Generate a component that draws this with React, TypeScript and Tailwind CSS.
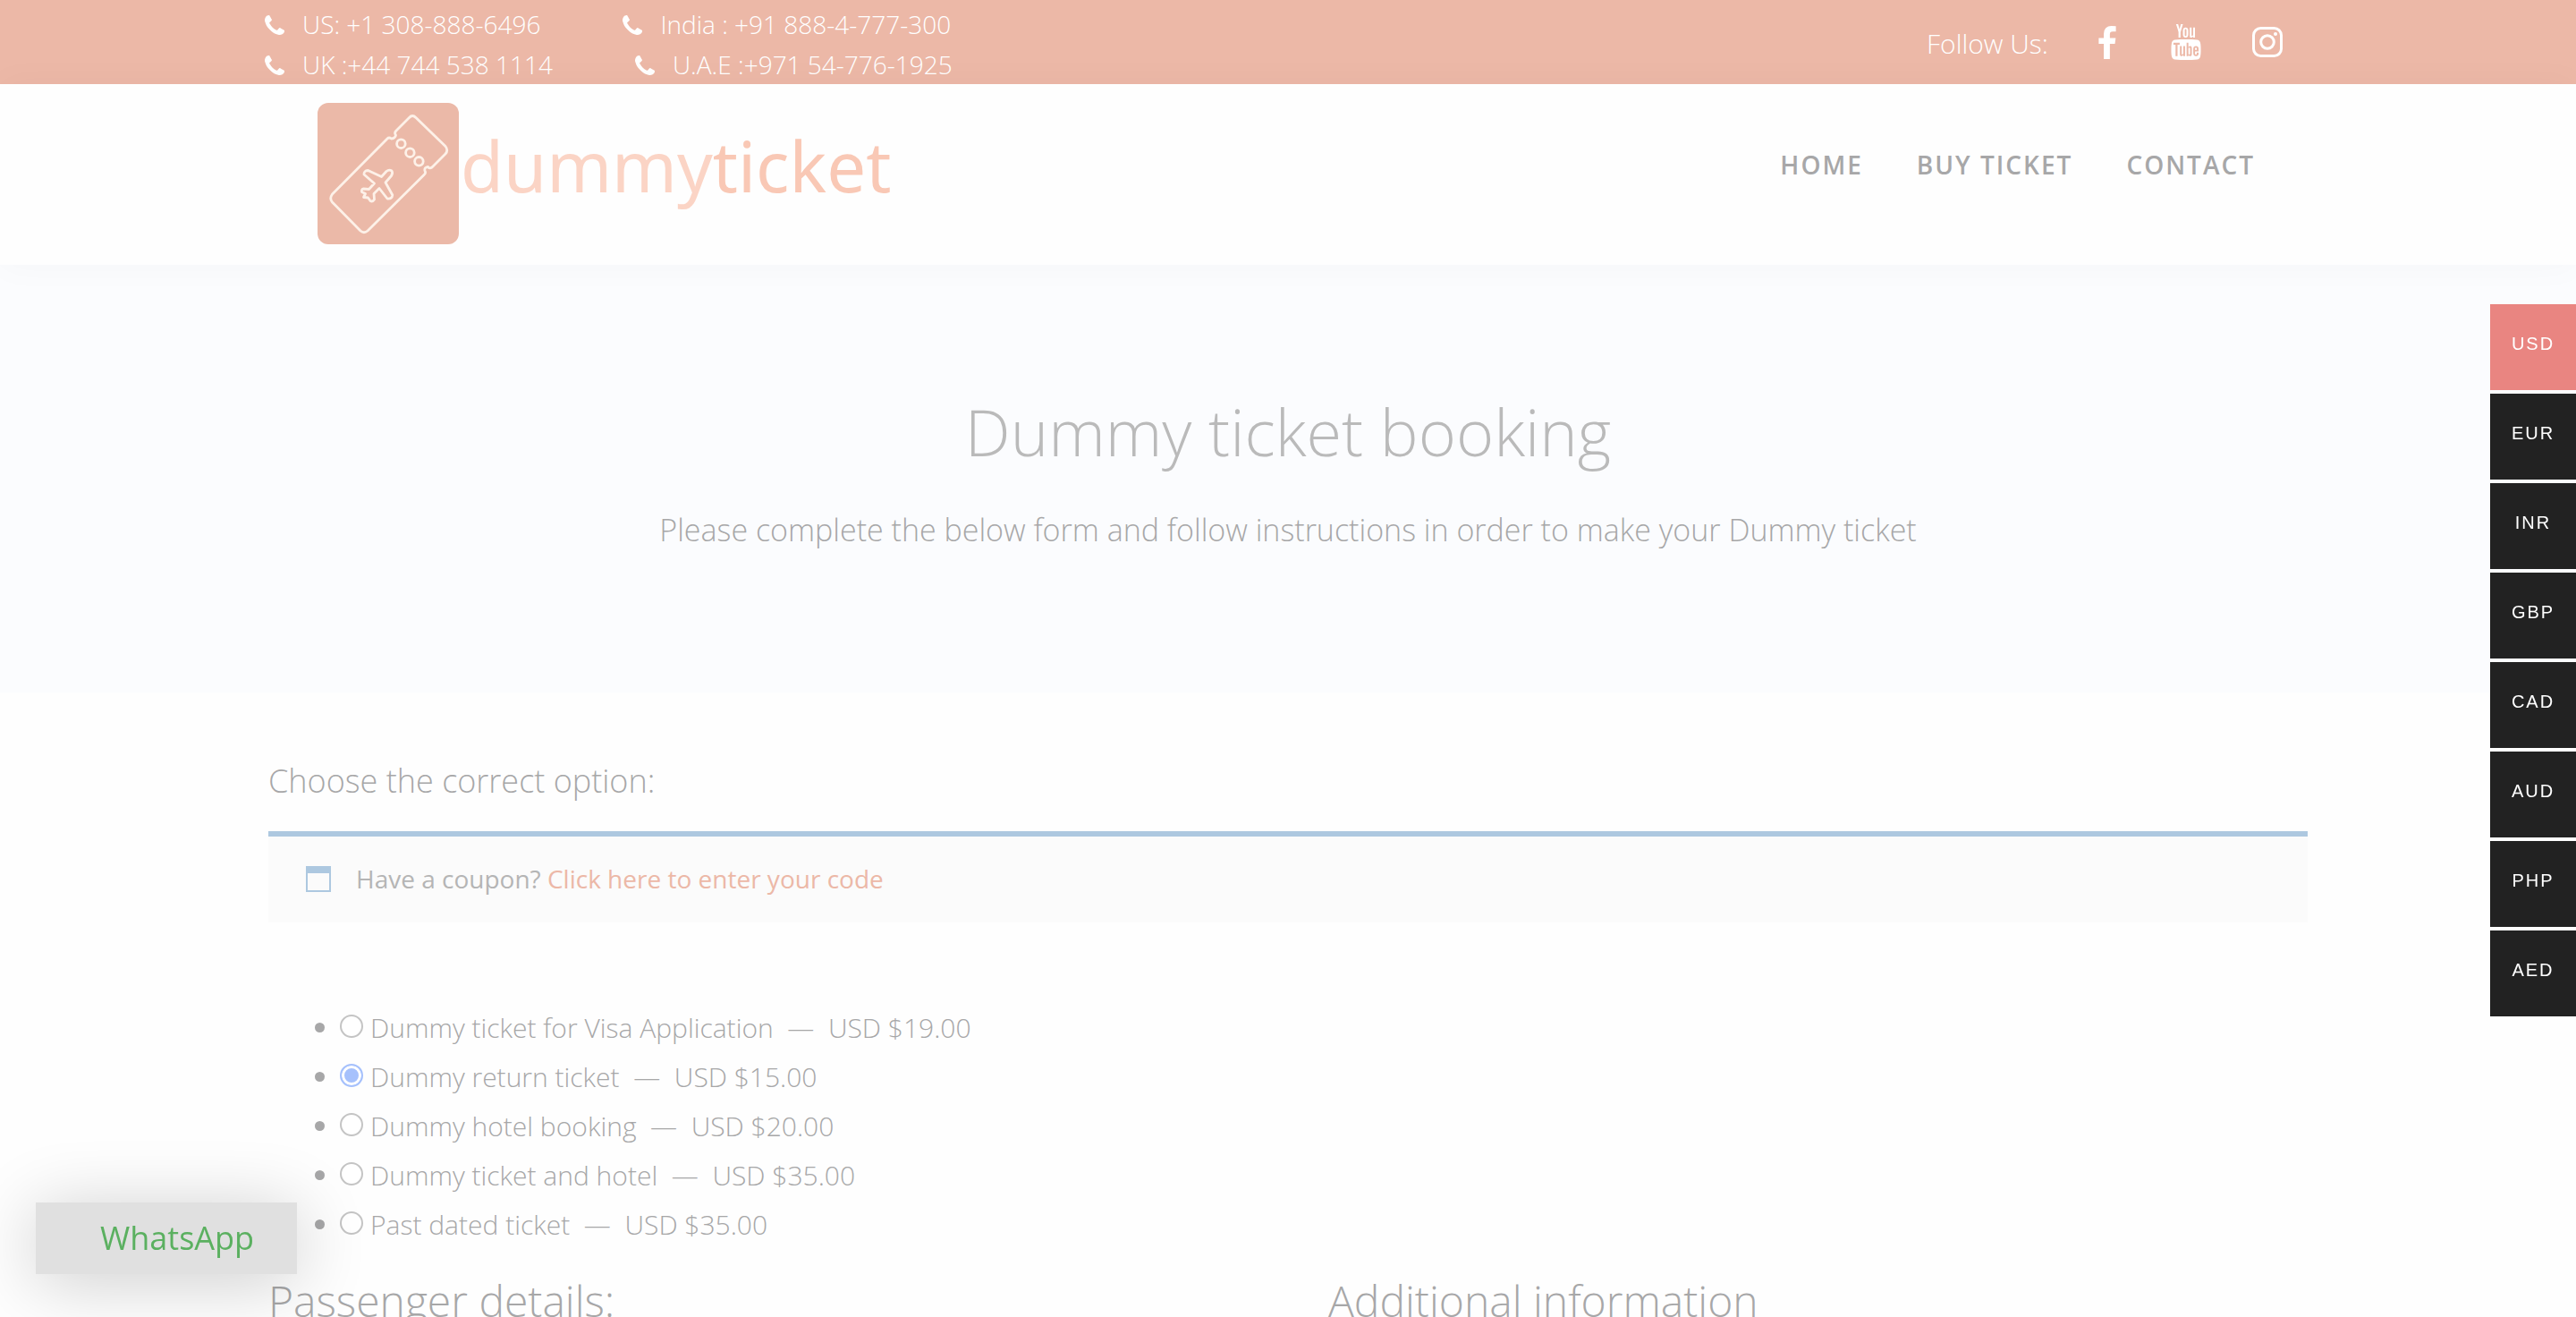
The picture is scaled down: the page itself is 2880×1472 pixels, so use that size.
import { useState } from "react";
import type { ReactNode } from "react";
import { TfiYoutube } from "react-icons/tfi";

const currencies = ["USD", "EUR", "INR", "GBP", "CAD", "AUD", "PHP", "AED"];

const options = [
  { id: "visa", name: "Dummy ticket for Visa Application", price: "USD $19.00" },
  { id: "return", name: "Dummy return ticket", price: "USD $15.00" },
  { id: "hotel", name: "Dummy hotel booking", price: "USD $20.00" },
  { id: "both", name: "Dummy ticket and hotel", price: "USD $35.00" },
  { id: "past", name: "Past dated ticket", price: "USD $35.00" },
];

function PhoneIcon() {
  return (
    <svg viewBox="0 128 1408 1408" className="size-[22px] shrink-0 fill-current" aria-hidden="true">
      <path d="M1408 1240q0 27-10 70.5t-21 68.5q-21 50-122 106-94 51-186 51-27 0-53-3.5t-57.5-12.5-47-14.5-55.5-20.5-49-18q-98-35-175-83-127-79-264-216t-216-264q-48-77-83-175-3-9-18-49t-20.5-55.5-14.5-47-12.5-57.5-3.5-53q0-92 51-186 56-101 106-122 25-11 68.5-21t70.5-10q14 0 21 3 18 6 53 76 11 19 30 54t35 63.5 31 53.5q3 4 17.5 25t21.5 35.5 7 28.5q0 20-28.5 50t-62 55-62 53-28.5 46q0 9 5 22.5t8.5 20.5 14 24 11.5 19q76 137 174 235t235 174q2 1 19 11.5t24 14 20.5 8.5 22.5 5q18 0 46-28.5t53-62 55-62 50-28.5q14 0 28.5 7t35.5 21.5 25 17.5q25 15 53.5 31t63.5 35 54 30q70 35 76 53 3 7 3 21z" />
    </svg>
  );
}

function Phone({ children }: { children: ReactNode }) {
  return (
    <span className="flex items-center gap-5 whitespace-nowrap">
      <PhoneIcon />
      {children}
    </span>
  );
}

function FacebookIcon() {
  return (
    <svg viewBox="95 0 864 1664" className="h-[37px] w-5 fill-current" aria-hidden="true">
      <path d="M959 12v264h-157q-86 0-116 36t-30 108v189h293l-39 296h-254v759h-306v-759h-255v-296h255v-218q0-186 104-288.5t277-102.5q147 0 228 12z" />
    </svg>
  );
}

function InstagramIcon() {
  return (
    <svg viewBox="0 0 34 34" className="size-[34px]" fill="none" stroke="currentColor" strokeWidth="3" aria-hidden="true">
      <rect x="1.5" y="1.5" width="31" height="31" rx="8" />
      <circle cx="17" cy="17" r="7.3" />
      <circle cx="26" cy="8" r="2" fill="currentColor" stroke="none" />
    </svg>
  );
}

function LogoMark() {
  return (
    <svg viewBox="15 15 158 158" className="size-[158px]" fill="none" stroke="#fdf1e8" strokeWidth="2.8" strokeLinejoin="round" strokeLinecap="round" aria-hidden="true">
      <rect x="15" y="15" width="158" height="158" rx="12" fill="#ebb9a8" stroke="none" />
      <path d="M117.500 31.500Q121 27.500 125 31.500L158 63.500Q161.500 68 158 72L143 87Q140 89 138.500 86.500Q134 87 135 91Q136.500 93.500 134 95.500L71 158Q67 161.500 63 158L31.500 126Q28 122 31.500 117L93 55Q95 53 97.500 55Q102 54.500 102.500 51Q100.500 48.500 103 46Z" />
      <circle cx="108.400" cy="60.700" r="4.800" />
      <circle cx="118.400" cy="70.700" r="4.800" />
      <circle cx="128.400" cy="80.300" r="4.800" />
      <path d="M71.500 90.500L86.500 97.500L92 91.500Q95 89 98 91Q99.500 93 97.500 96.500L91 104L98.800 118Q98.500 122.500 93 122L84 110.500L78 116.500L78.500 123Q76.500 126 74 124.500L71.500 121L66.500 120.500L68.500 116.500L64.500 114.500Q64 111.500 66 111L72.500 111.500L78.500 105L67 95Q66.500 91 71.500 90.500Z" />
    </svg>
  );
}

function CouponIcon() {
  return (
    <svg viewBox="0 0 28 29" className="h-[29px] w-7 shrink-0" aria-hidden="true">
      <path d="M0 0H28V29H0ZM2 8V27H26V8Z" fill="#adc8e0" fillRule="evenodd" />
    </svg>
  );
}

export default function App() {
  const [selected, setSelected] = useState("return");
  const [currency, setCurrency] = useState("USD");

  return (
    <div className="min-h-screen bg-[#fefefe] font-['Open_Sans',sans-serif] text-[30px] font-light text-[#a7a7a8]">
      <div className="bg-[#ecb8a7] text-white">
        <div className="mx-auto flex h-[94px] max-w-[2288px] justify-between">
          <div className="flex flex-col pt-[5px] text-[28px] leading-[45px]">
            <div className="flex gap-[92px]">
              <Phone>US: +1 308-888-6496</Phone>
              <Phone>India : +91 888-4-777-300</Phone>
            </div>
            <div className="flex gap-[92px]">
              <Phone>UK :+44 744 538 1114</Phone>
              <Phone>U.A.E :+971 54-776-1925</Phone>
            </div>
          </div>
          <div className="flex items-center pr-8">
            <span className="mr-14 pt-0.5 text-[30px]">Follow Us:</span>
            <a href="#facebook" aria-label="Facebook" className="mr-[58px]"><FacebookIcon /></a>
            <a href="#youtube" aria-label="YouTube" className="mr-[54px]"><TfiYoutube className="size-10" /></a>
            <a href="#instagram" aria-label="Instagram"><InstagramIcon /></a>
          </div>
        </div>
      </div>

      <header className="relative bg-[#fefefe] shadow-[0_0_40px_rgba(0,0,0,0.03)]">
        <div className="mx-auto flex h-[202px] max-w-[2170px] items-start justify-between">
          <a href="#home" className="flex pt-[21px]">
            <LogoMark />
            <span className="pl-0.5 font-['Noto_Sans',sans-serif] text-[78px] leading-[140px] font-normal text-[#fbd4c5]">
              dummy<span className="text-[#f9c8b5]">ticket</span>
            </span>
          </a>
          <nav className="flex gap-[60px] pt-[70px] pr-1 text-[28px] leading-10 font-semibold tracking-[2px]">
            <a href="#home">HOME</a>
            <a href="#buy">BUY TICKET</a>
            <a href="#contact">CONTACT</a>
          </nav>
        </div>
      </header>

      <section className="flex h-[478px] flex-col items-center bg-[#fbfcfe] pt-[136px] text-center">
        <h1 className="text-[72px] leading-[100px] text-[#bababa]">Dummy ticket booking</h1>
        <p className="mt-7 text-[34px] leading-[64px]">
          Please complete the below form and follow instructions in order to make your Dummy ticket
        </p>
      </section>

      <main className="mx-auto max-w-[2280px] pt-[67px]">
        <h2 className="text-[36px] leading-[64px]">Choose the correct option:</h2>
        <div className="mt-6 flex h-[102px] items-center gap-7 border-t-[6px] border-[#adc8e0] bg-[#fbfbfb] pb-0.5 pl-[42px] text-[28px] font-normal text-[#b5b5b5]">
          <CouponIcon />
          <p>
            Have a coupon? <a href="#coupon" className="text-[#ecb8a7]">Click here to enter your code</a>
          </p>
        </div>

        <ul className="mt-[90px] pl-[52px] leading-[55px]">
          {options.map((o) => (
            <li key={o.id} className="flex items-center">
              <span className="mr-[17px] size-[11px] rounded-full bg-[#a7a7a8]" />
              <input
                id={o.id}
                type="radio"
                name="product"
                checked={selected === o.id}
                onChange={() => setSelected(o.id)}
                className="mr-2 mb-1 size-[26px] appearance-none rounded-full border-2 border-[#c4c4c4] bg-white checked:border-[#a6c1fc] checked:bg-[#a6c1fc] checked:shadow-[inset_0_0_0_3px_white]"
              />
              <label htmlFor={o.id} className="whitespace-pre">
                {o.name}{"  —  "}{o.price}
              </label>
            </li>
          ))}
        </ul>

        <div className="mt-6 grid grid-cols-2 gap-[90px] text-[48px] leading-[68px]">
          <h3>Passenger details:</h3>
          <h3>Additional information</h3>
        </div>
      </main>

      <div className="fixed top-[340px] right-0 flex flex-col gap-1 font-['Liberation_Sans',sans-serif]">
        {currencies.map((c) => (
          <button
            key={c}
            type="button"
            aria-pressed={currency === c}
            onClick={() => setCurrency(c)}
            className="size-24 bg-[#222222] pb-2 text-[20px] font-normal tracking-[2px] text-white aria-pressed:bg-[#e98581]"
          >
            {c}
          </button>
        ))}
      </div>

      <a
        href="#whatsapp"
        className="fixed bottom-12 left-10 flex h-20 w-[292px] items-center bg-[#e0e0e0] pl-[72px] text-[36px] font-normal text-[#5bb060] shadow-[0_8px_80px_rgba(0,0,0,0.2)]"
      >
        WhatsApp
      </a>
    </div>
  );
}
